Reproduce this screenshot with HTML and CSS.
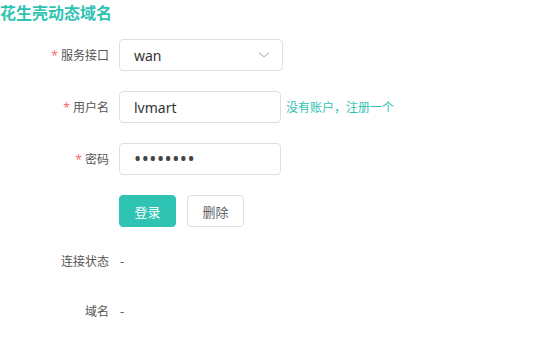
FILE: index.html
```html
<!DOCTYPE html>
<html lang="zh-CN">
<head>
  <meta charset="UTF-8" />
  <meta name="viewport" content="width=device-width, initial-scale=1.0" />
  <title>花生壳动态域名</title>
  <link rel="stylesheet" href="styles.css">
</head>
<body>
  <h1 class="title">花生壳动态域名</h1>

  <form class="form">
    <div class="form-item">
      <label class="label required">服务接口</label>
      <div class="select">
        <span>wan</span>
        <svg class="arrow" width="12" height="8" viewBox="0 0 12 8">
          <path d="M1 1.5 L6 6 L11 1.5" fill="none" stroke="#c0c4cc" stroke-width="1.2" />
        </svg>
      </div>
    </div>

    <div class="form-item">
      <label class="label required">用户名</label>
      <input class="input" type="text" value="lvmart" />
      <a class="link" href="#">没有账户，注册一个</a>
    </div>

    <div class="form-item">
      <label class="label required">密码</label>
      <input class="input password" type="password" value="12345678" />
    </div>

    <div class="form-item">
      <span class="label"></span>
      <button type="button" class="btn btn-primary">登录</button>
      <button type="button" class="btn">删除</button>
    </div>

    <div class="form-item">
      <label class="label">连接状态</label>
      <span class="value">-</span>
    </div>

    <div class="form-item">
      <label class="label">域名</label>
      <span class="value">-</span>
    </div>
  </form>
</body>
</html>
```

FILE: styles.css
```css
body {
  margin: 0;
  font-family: "Noto Sans", "Noto Sans CJK SC", sans-serif;
  color: #606266;
  background: #fff;
}

.title {
  margin: 0;
  padding-top: 1px;
  font-size: 16px;
  line-height: 24px;
  font-weight: bold;
  color: #2fc3b3;
}

.form {
  padding-top: 14px;
}

.form-item {
  display: flex;
  align-items: center;
  height: 32px;
  margin-bottom: 20px;
}

.form-item:nth-child(4) {
  margin-bottom: 18px;
}

.form-item:nth-child(5) {
  margin-bottom: 18px;
}

.label {
  box-sizing: border-box;
  width: 119px;
  padding-right: 10px;
  text-align: right;
  font-size: 12px;
  color: #555;
}

.required::before {
  content: "*";
  color: #f56c6c;
  margin-right: 3px;
}

.select {
  box-sizing: border-box;
  width: 164px;
  height: 32px;
  padding: 0 12px 0 14px;
  border: 1px solid #dcdfe6;
  border-radius: 4px;
  display: flex;
  align-items: center;
  justify-content: space-between;
  font-size: 14px;
  color: #333;
}

.input {
  box-sizing: border-box;
  width: 162px;
  height: 32px;
  padding: 0 14px;
  border: 1px solid #dcdfe6;
  border-radius: 4px;
  font-family: inherit;
  font-size: 14px;
  color: #333;
  outline: none;
}

.password {
  font-size: 19px;
  letter-spacing: 0.5px;
  color: #444;
}

.link {
  margin-left: 5px;
  font-size: 12px;
  color: #2fc3b3;
  text-decoration: none;
}

.btn {
  box-sizing: border-box;
  width: 57px;
  height: 32px;
  border: 1px solid #dcdfe6;
  border-radius: 4px;
  background: #fff;
  font-family: inherit;
  font-size: 13px;
  color: #606266;
  margin-right: 11px;
  padding: 0;
}

.btn-primary {
  background: #2fc3b3;
  border-color: #2fc3b3;
  color: #fff;
}

.value {
  font-size: 13px;
  padding-left: 1px;
}
```
